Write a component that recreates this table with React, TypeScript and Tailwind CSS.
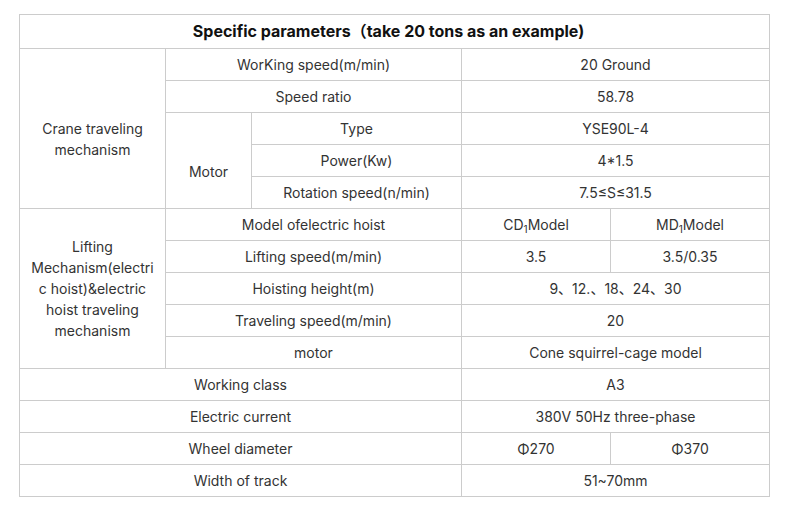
import React from 'react';

const td = 'border border-[#cccccc] text-center align-middle px-[10px] py-0';

const Sub1: React.FC = () => <sub className="text-[10px] align-baseline relative top-[3px]">1</sub>;

export default function App() {
  return (
    <div
      className="w-[786px] h-[507px] bg-white text-[#333333] text-[14px] leading-[21px] pt-[14px] pl-[19px]"
      style={{ fontFamily: 'Inter, "Noto Sans CJK SC", sans-serif' }}
    >
      <table className="table-fixed border-collapse w-[750px]">
        <colgroup>
          <col className="w-[146px]" />
          <col className="w-[86px]" />
          <col className="w-[210px]" />
          <col className="w-[149px]" />
          <col className="w-[159px]" />
        </colgroup>
        <tbody>
          <tr className="h-[34px]">
            <td colSpan={5} className={`${td} pr-[22px] font-bold text-[16px] text-[#111111]`}>
              Specific parameters（take 20 tons as an example)
            </td>
          </tr>
          <tr className="h-[32px]">
            <td rowSpan={5} className={`${td} pt-[21px]`}>Crane traveling mechanism</td>
            <td colSpan={2} className={td}>WorKing speed(m/min)</td>
            <td colSpan={2} className={td}>20 Ground</td>
          </tr>
          <tr className="h-[32px]">
            <td colSpan={2} className={td}>Speed ratio</td>
            <td colSpan={2} className={td}>58.78</td>
          </tr>
          <tr className="h-[32px]">
            <td rowSpan={3} className={`${td} pt-[21px]`}>Motor</td>
            <td className={td}>Type</td>
            <td colSpan={2} className={td}>YSE90L-4</td>
          </tr>
          <tr className="h-[32px]">
            <td className={td}>Power(Kw)</td>
            <td colSpan={2} className={td}>4*1.5</td>
          </tr>
          <tr className="h-[32px]">
            <td className={td}>Rotation speed(n/min)</td>
            <td colSpan={2} className={td}>7.5≤S≤31.5</td>
          </tr>
          <tr className="h-[32px]">
            <td rowSpan={5} className={`${td} px-[11px] break-words`}>
              Lifting Mechanism(electric hoist)&amp;electric hoist traveling mechanism
            </td>
            <td colSpan={2} className={td}>Model ofelectric hoist</td>
            <td className={td}>CD<Sub1 />Model</td>
            <td className={td}>MD<Sub1 />Model</td>
          </tr>
          <tr className="h-[32px]">
            <td colSpan={2} className={td}>Lifting speed(m/min)</td>
            <td className={td}>3.5</td>
            <td className={td}>3.5/0.35</td>
          </tr>
          <tr className="h-[32px]">
            <td colSpan={2} className={td}>Hoisting height(m)</td>
            <td colSpan={2} className={td}>9、12.、18、24、30</td>
          </tr>
          <tr className="h-[32px]">
            <td colSpan={2} className={td}>Traveling speed(m/min)</td>
            <td colSpan={2} className={td}>20</td>
          </tr>
          <tr className="h-[32px]">
            <td colSpan={2} className={td}>motor</td>
            <td colSpan={2} className={td}>Cone squirrel-cage model</td>
          </tr>
          <tr className="h-[32px]">
            <td colSpan={3} className={td}>Working class</td>
            <td colSpan={2} className={td}>A3</td>
          </tr>
          <tr className="h-[32px]">
            <td colSpan={3} className={td}>Electric current</td>
            <td colSpan={2} className={td}>380V 50Hz three-phase</td>
          </tr>
          <tr className="h-[32px]">
            <td colSpan={3} className={td}>Wheel diameter</td>
            <td className={td}>Φ270</td>
            <td className={td}>Φ370</td>
          </tr>
          <tr className="h-[32px]">
            <td colSpan={3} className={td}>Width of track</td>
            <td colSpan={2} className={td}>51~70mm</td>
          </tr>
        </tbody>
      </table>
    </div>
  );
}
